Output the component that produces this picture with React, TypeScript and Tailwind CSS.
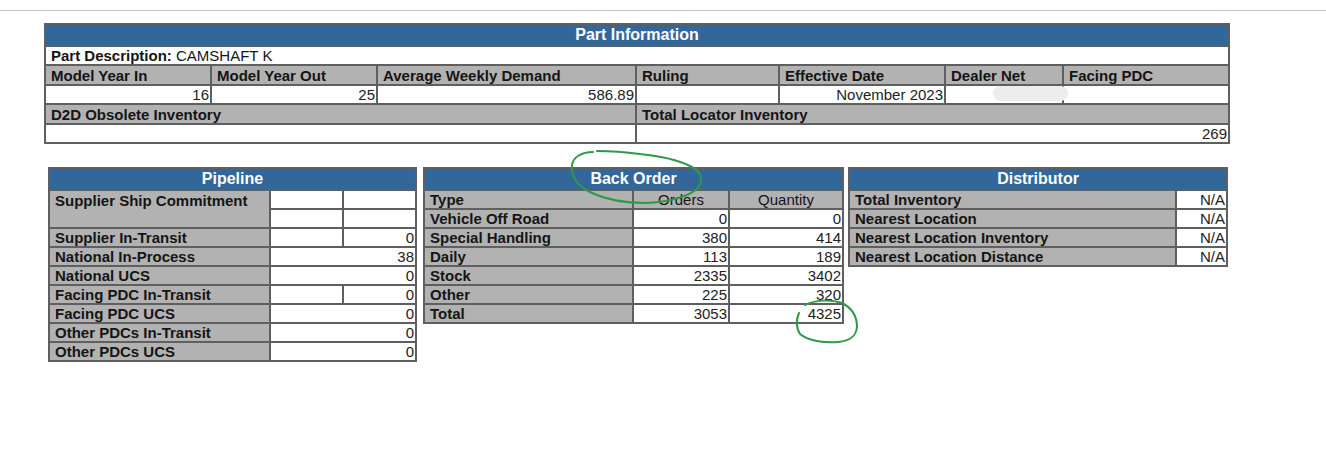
import React from 'react';

const border = 'border border-[#5f5f5f]';
const lab = `${border} bg-[#b2b2b2] font-bold text-[15px] leading-[17px] text-[#151515] px-[5px] text-left whitespace-nowrap overflow-hidden`;
const val = `${border} bg-white text-[15px] leading-[17px] text-[#222] pl-1 pr-[1px] text-right whitespace-nowrap overflow-hidden`;
const head = `${border} bg-[#336699] text-white font-bold text-[16px] leading-[18px] text-center h-[22px]`;

const pipelineRows: { label: string; cells: (string | null)[] }[] = [
  { label: 'Supplier In-Transit', cells: ['', '0'] },
  { label: 'National In-Process', cells: ['38'] },
  { label: 'National UCS', cells: ['0'] },
  { label: 'Facing PDC In-Transit', cells: ['', '0'] },
  { label: 'Facing PDC UCS', cells: ['0'] },
  { label: 'Other PDCs In-Transit', cells: ['0'] },
  { label: 'Other PDCs UCS', cells: ['0'] },
];

const backOrders = [
  { t: 'Vehicle Off Road', o: '0', q: '0' },
  { t: 'Special Handling', o: '380', q: '414' },
  { t: 'Daily', o: '113', q: '189' },
  { t: 'Stock', o: '2335', q: '3402' },
  { t: 'Other', o: '225', q: '320' },
  { t: 'Total', o: '3053', q: '4325' },
];

const distributor = ['Total Inventory', 'Nearest Location', 'Nearest Location Inventory', 'Nearest Location Distance'];

const App: React.FC = () => {
  return (
    <div className="relative min-h-[464px] w-[1326px] bg-white font-['Liberation_Sans',Arial,sans-serif] overflow-hidden">
      <div className="h-[10px]" />
      <div className="h-px bg-[#c4c4c4]" />

      {/* Part information */}
      <div className="pl-[44px] pt-[12px]">
        <table className={`w-[1186px] table-fixed border-separate border-spacing-0 ${border}`}>
          <colgroup>
            <col className="w-[166px]" />
            <col className="w-[166px]" />
            <col className="w-[259px]" />
            <col className="w-[143px]" />
            <col className="w-[166px]" />
            <col className="w-[118px]" />
            <col className="w-[166px]" />
          </colgroup>
          <tbody>
            <tr>
              <td colSpan={7} className={head}>Part Information</td>
            </tr>
            <tr>
              <td colSpan={7} className={`${border} bg-white text-[15px] leading-[17px] text-[#151515] px-[5px] h-[19px]`}>
                <span className="font-bold">Part Description:</span> CAMSHAFT K
              </td>
            </tr>
            <tr>
              {['Model Year In', 'Model Year Out', 'Average Weekly Demand', 'Ruling', 'Effective Date', 'Dealer Net', 'Facing PDC'].map((h) => (
                <td key={h} className={`${lab} h-[20px]`}>{h}</td>
              ))}
            </tr>
            <tr>
              {['16', '25', '586.89', '', 'November 2023', '', ''].map((v, i) => (
                <td key={i} className={`${val} h-[19px]`}>{v}</td>
              ))}
            </tr>
            <tr>
              <td colSpan={3} className={`${lab} h-[20px]`}>D2D Obsolete Inventory</td>
              <td colSpan={4} className={`${lab} h-[20px]`}>Total Locator Inventory</td>
            </tr>
            <tr>
              <td colSpan={3} className={`${val} h-[19px]`}></td>
              <td colSpan={4} className={`${val} h-[19px]`}>269</td>
            </tr>
          </tbody>
        </table>
      </div>

      <div className="flex items-start pl-[48px] pt-[23px]">
        {/* Pipeline */}
        <table className={`w-[369px] table-fixed border-separate border-spacing-0 ${border}`}>
          <colgroup>
            <col className="w-[221px]" />
            <col className="w-[73px]" />
            <col className="w-[73px]" />
          </colgroup>
          <tbody>
            <tr>
              <td colSpan={3} className={head}>Pipeline</td>
            </tr>
            <tr>
              <td rowSpan={2} className={`${lab} align-top pt-[1px]`}>Supplier Ship Commitment</td>
              <td className={`${val} h-[19px]`}></td>
              <td className={`${val} h-[19px]`}></td>
            </tr>
            <tr>
              <td className={`${val} h-[19px]`}></td>
              <td className={`${val} h-[19px]`}></td>
            </tr>
            {pipelineRows.map((r) => (
              <tr key={r.label}>
                <td className={`${lab} h-[19px]`}>{r.label}</td>
                {r.cells.length === 1 ? (
                  <td colSpan={2} className={`${val} h-[19px]`}>{r.cells[0]}</td>
                ) : (
                  r.cells.map((c, i) => (
                    <td key={i} className={`${val} h-[19px]`}>{c}</td>
                  ))
                )}
              </tr>
            ))}
          </tbody>
        </table>

        {/* Back order */}
        <table className={`ml-[6px] w-[421px] table-fixed border-separate border-spacing-0 ${border}`}>
          <colgroup>
            <col className="w-[209px]" />
            <col className="w-[96px]" />
            <col className="w-[114px]" />
          </colgroup>
          <tbody>
            <tr>
              <td colSpan={3} className={head}>Back Order</td>
            </tr>
            <tr>
              <td className={`${lab} h-[19px]`}>Type</td>
              <td className={`${border} bg-[#b2b2b2] text-[15px] leading-[17px] text-[#151515] text-center h-[19px]`}>Orders</td>
              <td className={`${border} bg-[#b2b2b2] text-[15px] leading-[17px] text-[#151515] text-center h-[19px]`}>Quantity</td>
            </tr>
            {backOrders.map((r) => (
              <tr key={r.t}>
                <td className={`${lab} h-[19px]`}>{r.t}</td>
                <td className={`${val} h-[19px]`}>{r.o}</td>
                <td className={`${val} h-[19px]`}>{r.q}</td>
              </tr>
            ))}
          </tbody>
        </table>

        {/* Distributor */}
        <table className={`ml-[4px] w-[380px] table-fixed border-separate border-spacing-0 ${border}`}>
          <colgroup>
            <col className="w-[327px]" />
            <col className="w-[51px]" />
          </colgroup>
          <tbody>
            <tr>
              <td colSpan={2} className={head}>Distributor</td>
            </tr>
            {distributor.map((d) => (
              <tr key={d}>
                <td className={`${lab} h-[19px]`}>{d}</td>
                <td className={`${val} h-[19px]`}>N/A</td>
              </tr>
            ))}
          </tbody>
        </table>
      </div>

      {/* redaction blur and hand-drawn marks */}
      <svg className="pointer-events-none absolute left-0 top-0" width="1326" height="464" viewBox="0 0 1326 464">
        <rect x="993" y="86" width="75" height="15" rx="7.5" fill="#ededed" />
        <path
          d="M593 152 C582 152 573 157 572 165 C571 175 576 186 592 193 C605 199 625 203 645 203 C668 202 688 197 698 188 C704 180 701 171 690 166 C678 160 660 156 640 154 C625 152 610 151 597 151"
          fill="none"
          stroke="#2c9a4a"
          strokeWidth="2"
          strokeLinecap="round"
        />
        <path
          d="M805 305 C815 300 830 299 842 303 C852 308 857 316 857 327 C856 336 851 341 838 342 C824 343 808 341 800 334 C796 328 796 319 799 313"
          fill="none"
          stroke="#2c9a4a"
          strokeWidth="2"
          strokeLinecap="round"
        />
      </svg>
    </div>
  );
};

export default App;
